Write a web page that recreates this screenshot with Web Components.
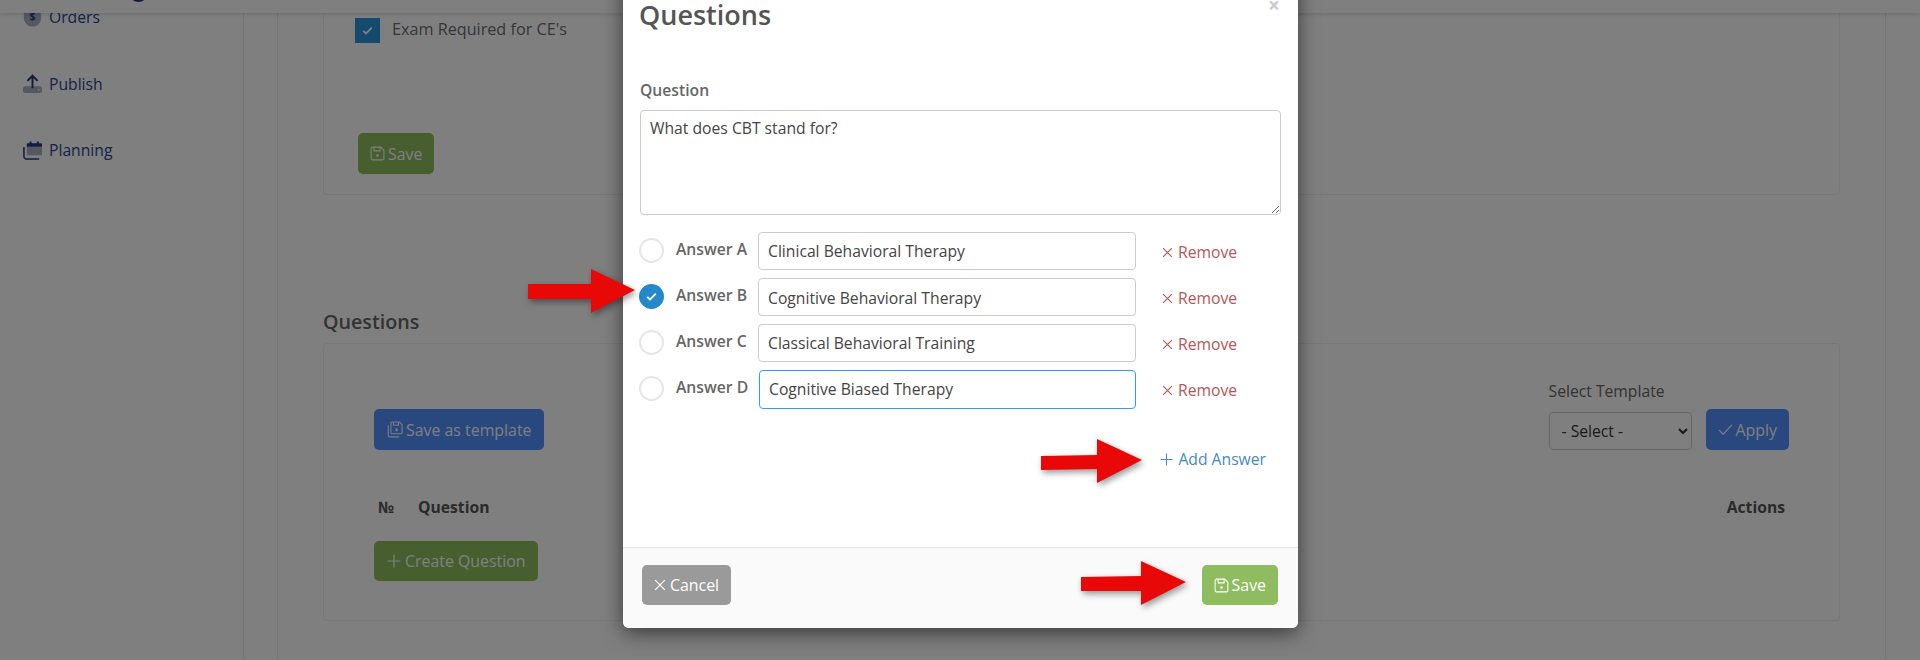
<!DOCTYPE html>
<html lang="en"><head><meta charset="utf-8"><title>Questions</title>
<style>
html,body{margin:0;padding:0;background:#fff}
body{font:15.7px/20px "Open Sans","Noto Sans",sans-serif;color:#444;width:1920px;height:660px;overflow:hidden}
</style></head><body>
<admin-page>
  <top-bar></top-bar>
  <side-nav>
    <nav-item icon="orders">Orders</nav-item>
    <nav-item icon="publish">Publish</nav-item>
    <nav-item icon="planning">Planning</nav-item>
  </side-nav>
  <page-content>
    <form-card kind="settings">
      <check-row>Exam Required for CE's</check-row>
      <ui-btn variant="green" icon="save" slot="action" h="41">Save</ui-btn>
    </form-card>
    <section-title>Questions</section-title>
    <questions-panel></questions-panel>
  </page-content>
  <dim-backdrop></dim-backdrop>
  <question-modal>
    <answer-row letter="A" value="Clinical Behavioral Therapy"></answer-row>
    <answer-row letter="B" value="Cognitive Behavioral Therapy" checked></answer-row>
    <answer-row letter="C" value="Classical Behavioral Training"></answer-row>
    <answer-row letter="D" value="Cognitive Biased Therapy" focused></answer-row>
  </question-modal>
  <red-arrow style="left:528px;top:269px" pts="0,15 63,15 63,0 107,21 63,44 63,30 0,30" w="107"></red-arrow>
  <red-arrow style="left:1041px;top:439px" pts="0,17 56,16 56,0 101,21 56,44 56,30 0,31" w="101"></red-arrow>
  <red-arrow style="left:1081px;top:561px" pts="0,16 60,15 60,0 105,21 60,44 60,30 0,30" w="105"></red-arrow>
</admin-page>
<script>
const ICONS = {
  save:'<svg viewBox="0 0 16 16" fill="none" stroke="currentColor" stroke-width="1.1"><path d="M2.6 1.2h8.8l3.4 3.4v8.8a1.4 1.4 0 0 1-1.4 1.4H2.6a1.4 1.4 0 0 1-1.4-1.4V2.6a1.4 1.4 0 0 1 1.4-1.4z"/><path d="M4.4 1.4v3.8h6.4V1.4"/><circle cx="8" cy="10.2" r="1.4" fill="currentColor" stroke="none"/></svg>',
  saves:'<svg viewBox="0 0 18 18" fill="none" stroke="currentColor" stroke-width="1.1"><path d="M6.4 1h7.8l2.8 2.8v8.6a1.2 1.2 0 0 1-1.2 1.2H6.4a1.2 1.2 0 0 1-1.2-1.2V2.2A1.2 1.2 0 0 1 6.4 1z"/><path d="M8 1.2v3.4h5.2V1.2"/><circle cx="11.2" cy="9.4" r="1.4" fill="currentColor" stroke="none"/><path d="M2.4 4.4v10.8a1.6 1.6 0 0 0 1.6 1.6h10" /></svg>',
  x:'<svg viewBox="0 0 12 12" fill="none" stroke="currentColor" stroke-width="1.2"><path d="M1.2 1.2l9.6 9.6M10.8 1.2l-9.6 9.6"/></svg>',
  plus:'<svg viewBox="0 0 14 14" fill="none" stroke="currentColor" stroke-width="1.2"><path d="M7 .5v13M.5 7h13"/></svg>',
  check:'<svg viewBox="0 0 14 14" fill="none" stroke="currentColor" stroke-width="1.1"><path d="M1 7.6l3.8 3.8L13 2.6"/></svg>',
  tick:'<svg viewBox="0 0 14 14" fill="none" stroke="currentColor" stroke-width="2.2"><path d="M1.5 7.4l3.6 3.4L12.5 3.4"/></svg>',
  orders:'<svg viewBox="0 0 20 22"><path d="M0 0h20v11.5C20 17 15.5 21.5 10 21.5S0 17 0 11.5z" fill="#a8b0c0"/><text x="10" y="14" text-anchor="middle" font-family="Open Sans" font-size="12" font-weight="700" fill="#1f3a80">$</text></svg>',
  publish:'<svg viewBox="0 0 20 20"><rect x="0" y="13" width="20" height="7" rx="2.4" fill="#a8b0c0"/><circle cx="16.5" cy="16.4" r="1" fill="#fff"/><path d="M10 15V2M4.6 7.2L10 1.8l5.4 5.4" fill="none" stroke="#1f3a80" stroke-width="2.1"/></svg>',
  planning:'<svg viewBox="0 0 20 20"><path d="M4 6h15a1 1 0 0 1 1 1v7a1 1 0 0 1-1 1H5a1 1 0 0 1-1-1z" fill="#a8b0c0"/><path d="M4.6 2.4h14.4a1 1 0 0 1 1 1V6H4V3z" fill="#1f3a80"/><path d="M8 0.4v4M15.6 0.4v4" stroke="#1f3a80" stroke-width="2"/><path d="M1 6.4v10A2.6 2.6 0 0 0 3.6 19H17" fill="none" stroke="#1f3a80" stroke-width="1.6"/></svg>'
};
function el(tag, css, html){
  class C extends HTMLElement{
    constructor(){super();this.attachShadow({mode:'open'})}
    connectedCallback(){
      const h = typeof html==='function'?html(this):html;
      this.shadowRoot.innerHTML='<style>'+css+'</style>'+h;
    }
  }
  customElements.define(tag,C);
}
el('ui-icon',':host{display:inline-flex;width:var(--s,14px);height:var(--s,14px);flex:none}svg{width:100%;height:100%;display:block}',
  t=>ICONS[t.getAttribute('name')]||'');
el('admin-page',':host{display:flex;position:relative;width:1920px;height:660px;overflow:hidden;align-items:flex-start}','<slot></slot>');
el('top-bar',':host{position:absolute;left:0;top:0;right:0;height:13px;z-index:2;background:#fff;box-shadow:0 1px 4px rgba(0,0,0,.16);overflow:hidden;display:flex;padding-left:129px;box-sizing:border-box}i{display:block;width:19px;height:19px;border-radius:50%;background:#1c3a80;margin-top:-17px}','<i></i>');
el('side-nav',':host{display:flex;flex-direction:column;flex:none;width:244px;height:700px;box-sizing:border-box;border-right:1px solid #e8e8e8;margin-top:-16px;padding-left:23px}','<slot></slot>');
el('nav-item',':host{display:flex;align-items:center;gap:7px;height:66.5px;color:#2a4592}ui-icon{--s:19px}',
  t=>`<ui-icon name="${t.getAttribute('icon')}"></ui-icon><span><slot></slot></span>`);
el('page-content',':host{display:block;flex:none;width:1609px;box-sizing:border-box;margin-left:33px;height:720px;margin-top:-20px;border-left:1px solid #e8e8e8;border-right:1px solid #e8e8e8;padding:0 45px}','<slot></slot>');
el('form-card',':host{display:block;border:1px solid #eee;border-radius:4px;padding:37px 0 20px 31px;box-sizing:border-box}.a{margin:90px 0 0 3px}','<slot></slot><div class="a"><slot name="action"></slot></div>');
el('check-row',':host{display:flex;align-items:center;gap:12px;font-size:16.2px;color:#6c6c6c}b{width:25px;height:25px;background:#2695dc;color:#fff;display:flex;align-items:center;justify-content:center;flex:none}ui-icon{--s:11px}span{margin-top:-3px}',
  '<b><ui-icon name="tick"></ui-icon></b><span><slot></slot></span>');
el('section-title',':host{display:block;font-size:19.7px;line-height:24px;font-weight:600;color:#666;margin:115px 0 9px}','<slot></slot>');
el('ui-btn',`:host{display:inline-flex;align-items:center;gap:3px;box-sizing:border-box;height:40px;padding:0 12px;border-radius:5px;color:#fff;white-space:nowrap;vertical-align:top;font-size:15.9px}
:host([h="41"]){height:41px}
:host([variant=green]){background:#8fbc5f}
:host([variant=blue]){background:#5291ff}
:host([variant=gray]){background:#9a9a9a}
ui-icon{--s:15px}
:host([icon=saves]) ui-icon{--s:17px}
:host([icon=x]) ui-icon{--s:12px}
:host([icon=plus]) ui-icon{--s:14px}
:host([icon=plus]){padding-left:13px;gap:4px}
:host([icon=x]){gap:4px}`,t=>`<ui-icon name="${t.getAttribute('icon')}"></ui-icon><span><slot></slot></span>`);
el('questions-panel',`:host{display:block;height:278px;box-sizing:border-box;border:1px solid #eee;border-radius:4px;padding:37px 50px 0}
.top{display:flex;justify-content:space-between;align-items:flex-end}
.tpl{display:flex;flex-direction:column;gap:8px;color:#666}
.ctl{display:flex;align-items:flex-end;gap:14px}
select{width:143px;height:38px;box-sizing:border-box;border:1px solid #ccc;border-radius:4px;background:#fff;color:#333;font:15.7px "Open Sans",sans-serif;padding:0 8px}
.head{display:flex;margin-top:47px;padding:0 4px;font-weight:700;color:#555;justify-content:space-between}
.head span:first-child{width:40px}.l{display:flex}
.cr{margin-top:24px}`,
`<div class="top"><ui-btn variant="blue" icon="saves" h="41">Save as template</ui-btn>
<div class="tpl"><span>Select Template</span><div class="ctl"><select><option>- Select -</option></select><ui-btn variant="blue" icon="check" h="41">Apply</ui-btn></div></div></div>
<div class="head"><div class="l"><span>№</span><span>Question</span></div><span>Actions</span></div>
<div class="cr"><ui-btn variant="green" icon="plus">Create Question</ui-btn></div>`);
el('dim-backdrop',':host{position:absolute;inset:0;background:rgba(0,0,0,.5);z-index:3}','');
el('question-modal',`:host{position:absolute;left:623px;top:-30px;width:675px;height:658px;background:#fff;border-radius:6px;box-shadow:0 5px 20px rgba(0,0,0,.55);z-index:4;display:flex;flex-direction:column;box-sizing:border-box}
h2{margin:30px 0 0 16px;font-size:27px;line-height:30px;font-weight:600;color:#555}
.close{position:absolute;right:18px;top:28px;color:#ccc;font-size:21px;line-height:14px;font-weight:700}
.b{padding:0 17px;margin-top:50px;display:flex;flex-direction:column}
label{font-weight:600;color:#666;line-height:20px}
textarea{display:block;box-sizing:border-box;width:641px;height:105px;margin-top:10px;margin-bottom:17px;border:1px solid #ccc;border-radius:4px;padding:7px 9px;font:15.7px/20px "Open Sans",sans-serif;color:#444;outline:none}
.rows{display:flex;flex-direction:column;gap:8px}
.add{display:flex;justify-content:flex-end;align-items:center;gap:5px;margin:40px 15px 0 0;color:#4a88c4}
.add ui-icon{--s:13px}
footer{margin-top:auto;height:81px;box-sizing:border-box;border-top:1px solid #e6e6e6;background:#fafafa;border-radius:0 0 6px 6px;display:flex;align-items:flex-start;justify-content:space-between;padding:17px 20px 0 19px}`,
`<h2>Questions</h2><span class="close">×</span>
<div class="b"><label>Question</label><textarea>What does CBT stand for?</textarea>
<div class="rows"><slot></slot></div>
<div class="add"><ui-icon name="plus"></ui-icon><span>Add Answer</span></div></div>
<footer><ui-btn variant="gray" icon="x">Cancel</ui-btn><ui-btn variant="green" icon="save">Save</ui-btn></footer>`);
el('answer-row',`:host{display:flex;align-items:flex-start;height:38px;color:#444}
:host([focused]){height:39px}
.r{width:25px;height:25px;box-sizing:border-box;border:2px solid #e6e6e6;border-radius:50%;margin:6px 0 0 -1px;flex:none;display:flex;align-items:center;justify-content:center;color:#fff}
:host([checked]) .r{background:#2389c9;border-color:#2389c9}
.r ui-icon{--s:11px}
.l{width:82px;margin-left:12px;margin-top:7px;font-weight:600;color:#666;flex:none;white-space:nowrap}
.f{width:378px;height:100%;box-sizing:border-box;border:1px solid #ccc;border-radius:4px;padding:0 9px;display:flex;align-items:center;flex:none}
:host([checked]) .f{padding-top:2px}
:host([focused]) .f{border-color:#2f9bff;margin-left:1px;width:377px;padding-bottom:2px}
.x{display:flex;align-items:center;gap:5px;margin:10px 0 0 26px;color:#b85555}
.x ui-icon{--s:11px}`,
t=>`<div class="r">${t.hasAttribute('checked')?'<ui-icon name="tick"></ui-icon>':''}</div><div class="l">Answer ${t.getAttribute('letter')}</div><div class="f">${t.getAttribute('value')}</div><div class="x"><ui-icon name="x"></ui-icon><span>Remove</span></div>`);
el('red-arrow',':host{position:absolute;z-index:5;display:block;height:44px}svg{display:block;overflow:visible;filter:drop-shadow(2px 3px 3px rgba(0,0,0,.4))}',
  t=>`<svg width="${t.getAttribute('w')}" height="44"><polygon points="${t.getAttribute('pts')}" fill="#e90808"/></svg>`);
</script>
</body></html>
